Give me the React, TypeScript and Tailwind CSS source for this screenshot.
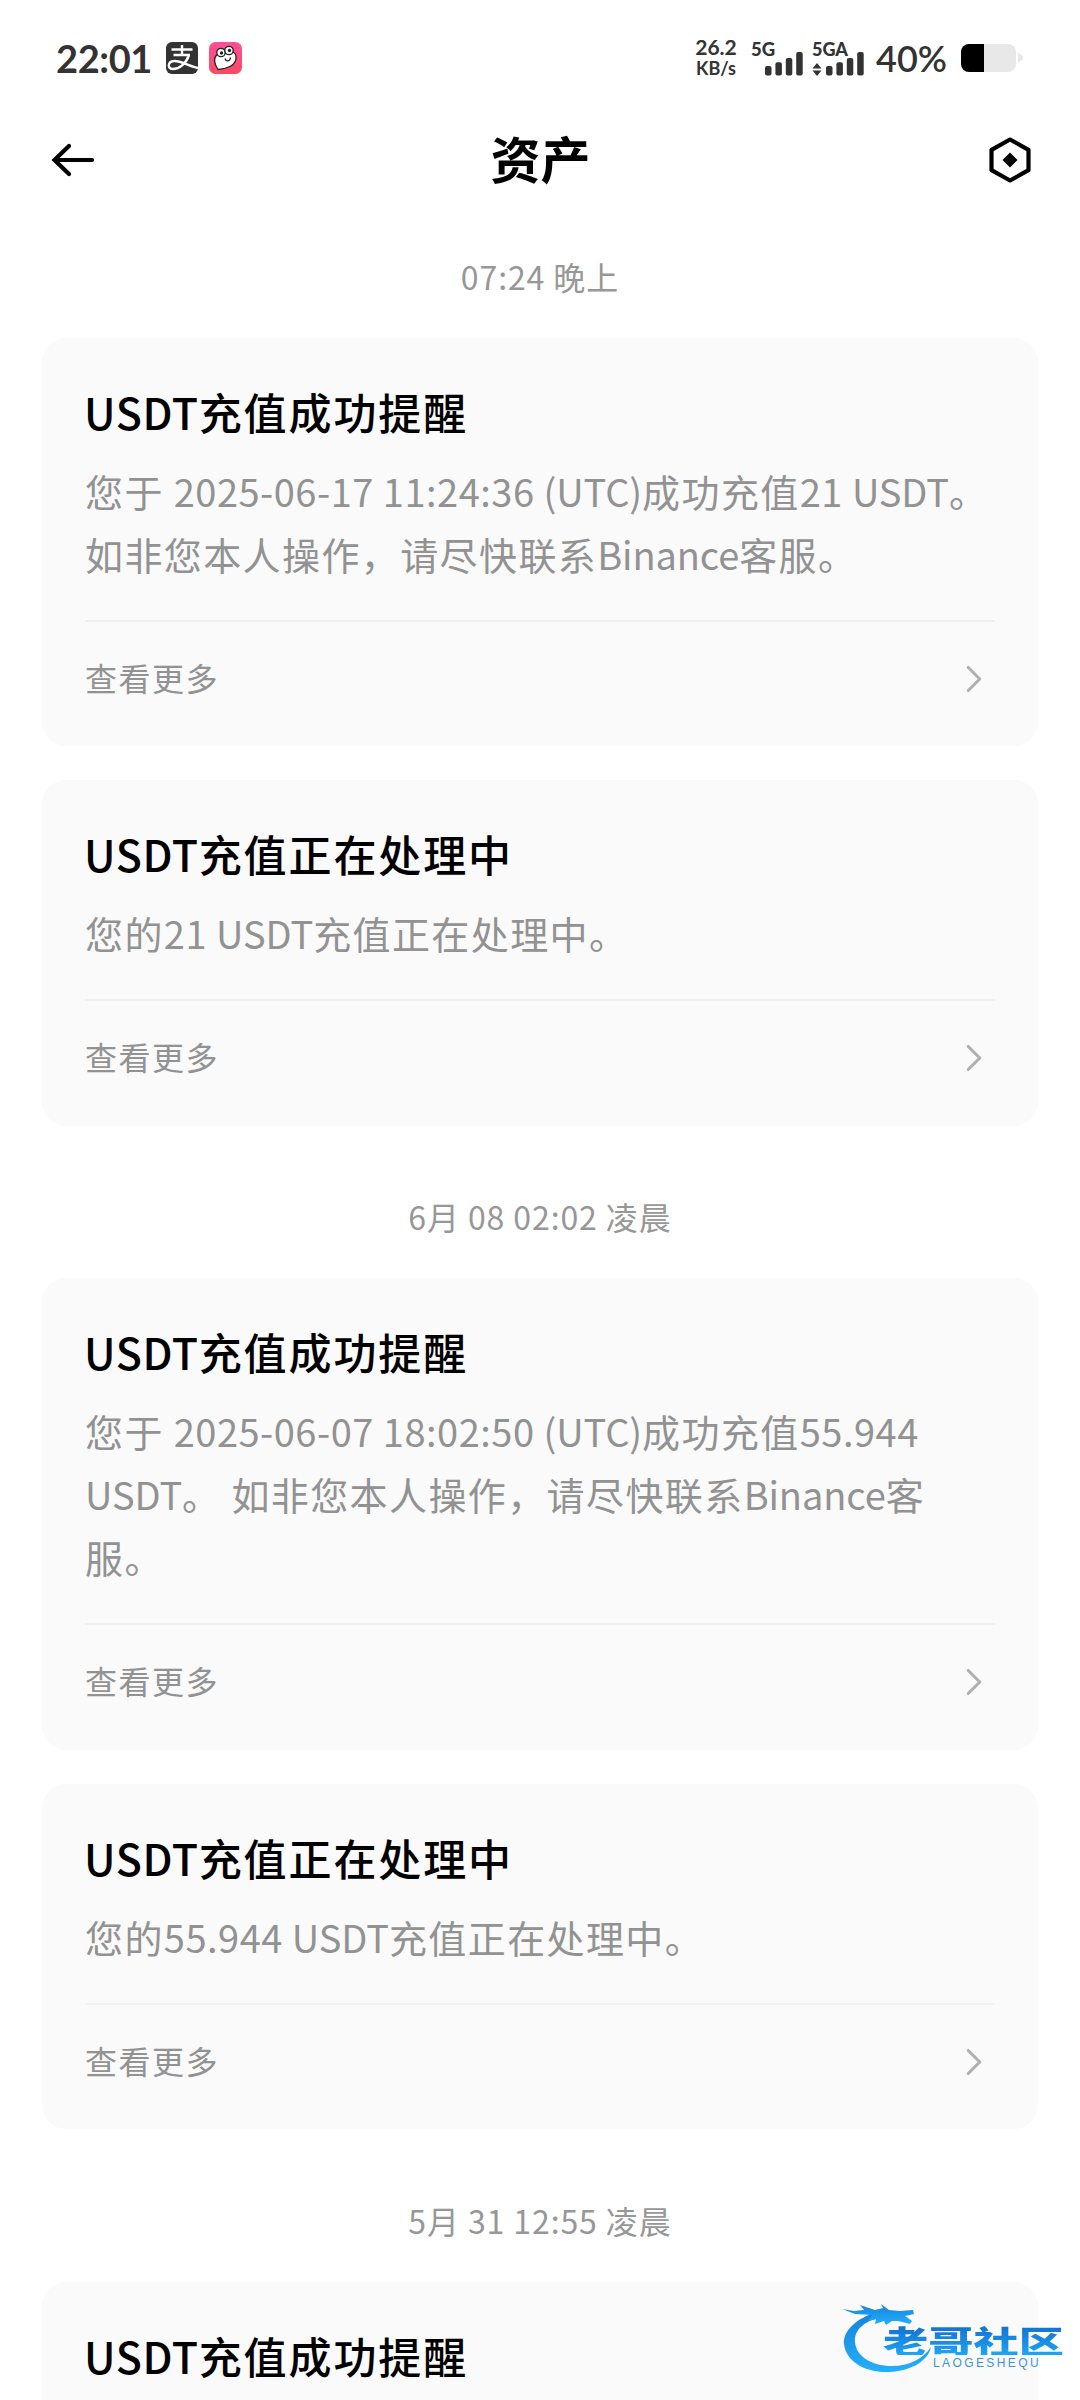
import { ChevronRight } from 'lucide-react';

type Message = { title: string; lines: string[] };
type Group = { time: string; messages: Message[] };

const GROUPS: Group[] = [
  {
    time: '07:24 晚上',
    messages: [
      {
        title: 'USDT充值成功提醒',
        lines: [
          '您于 2025-06-17 11:24:36 (UTC)成功充值21 USDT。',
          '如非您本人操作，请尽快联系Binance客服。',
        ],
      },
      { title: 'USDT充值正在处理中', lines: ['您的21 USDT充值正在处理中。'] },
    ],
  },
  {
    time: '6月 08 02:02 凌晨',
    messages: [
      {
        title: 'USDT充值成功提醒',
        lines: [
          '您于 2025-06-07 18:02:50 (UTC)成功充值55.944',
          'USDT。 如非您本人操作，请尽快联系Binance客',
          '服。',
        ],
      },
      { title: 'USDT充值正在处理中', lines: ['您的55.944 USDT充值正在处理中。'] },
    ],
  },
  {
    time: '5月 31 12:55 凌晨',
    messages: [{ title: 'USDT充值成功提醒', lines: [] }],
  },
];

// Latin letters and digits are set tighter than the Chinese text around them
function MixedText({ text }: { text: string }) {
  const parts = text.split(/([A-Za-z()]+|[0-9][0-9:.\- ]*)/);
  return (
    <>
      {parts.map((part, i) => {
        if (/^[A-Za-z(]/.test(part)) {
          return <span key={i} className="tracking-[-0.1px]">{part}</span>;
        }
        if (/^[0-9]/.test(part)) {
          return <span key={i} className="tracking-[0.5px]">{part}</span>;
        }
        return part;
      })}
    </>
  );
}

function SignalBars() {
  return (
    <svg width="38" height="24" viewBox="0 0 38 24" fill="#333">
      <rect x="0" y="14" width="6.5" height="9.5" rx="2" />
      <rect x="10.4" y="10.3" width="6.5" height="13.2" rx="2" />
      <rect x="20.8" y="6" width="6.5" height="17.5" rx="2" />
      <rect x="31.2" y="0" width="6.5" height="23.5" rx="2" />
    </svg>
  );
}

function StatusBar() {
  return (
    <div className="flex h-[118px] items-start pl-[56px] pr-[57px] font-['Lato','Noto_Sans_CJK_SC',sans-serif] text-[#333]">
      <span className="mt-[37px] w-[110px] text-[38px] leading-[42px] font-bold tracking-[-0.4px]">22:01</span>
      <svg className="mt-[42px]" width="32" height="32" viewBox="0 0 32 32">
        <rect width="32" height="32" rx="6" fill="#333" />
        <g fill="none" stroke="#fff" strokeWidth="2.4">
          <path d="M5.5 7.5H26.5M16 3V13M7.5 13H24" />
          <path d="M23 13C20 22 13 27 7 27C1 27 1.5 19.5 8 19C15 18.5 22 24 32 26" />
        </g>
      </svg>
      <svg className="mt-[42px] ml-[11px]" width="33" height="32" viewBox="0 0 33 32">
        <defs>
          <linearGradient id="pink" x1="0" y1="0" x2="0" y2="1">
            <stop offset="0" stopColor="#ff4f9a" />
            <stop offset="1" stopColor="#fb4a60" />
          </linearGradient>
        </defs>
        <rect width="33" height="32" rx="6.5" fill="url(#pink)" />
        <g fill="#fff" stroke="#222" strokeWidth="1.3">
          <path d="M7.5 13C4 17 6 23 9 27.5C15 27 24 25 26.5 19C28 14 26 11 24 10Z" />
          <circle cx="12" cy="10.5" r="4.2" />
          <circle cx="20" cy="8.5" r="4.2" />
          <path d="M16 16.5C17 20 21 19.5 21.5 15.5" fill="none" />
        </g>
        <circle cx="12.5" cy="11" r="1.7" fill="#222" />
        <circle cx="20.5" cy="8.5" r="1.7" fill="#222" />
      </svg>

      <div className="ml-auto flex items-start">
        <div className="mt-[36px] w-[44px] text-center font-bold">
          <div className="text-[21px] leading-[22px]">26.2</div>
          <div className="text-[18px] leading-[21px]">KB/s</div>
        </div>
        <div className="ml-[13px] mt-[38px] w-[61px]">
          <div className="h-[14px] text-[18.5px] leading-[22px] font-black">5G</div>
          <div className="pl-[14px]">
            <SignalBars />
          </div>
        </div>
        <div className="mt-[38px] w-[63px]">
          <div className="h-[14px] text-[18px] leading-[22px] font-black">5GA</div>
          <div className="flex items-end gap-[4px]">
            <svg width="10" height="13" viewBox="0 0 10 13" fill="#333">
              <path d="M5 0L9.5 5.5H0.5ZM0.5 7.5H9.5L5 13Z" />
            </svg>
            <SignalBars />
          </div>
        </div>
        <span className="mt-[37px] w-[86px] pl-px text-[36px] leading-[42px] font-semibold">40%</span>
        <svg className="mt-[43px]" width="62" height="30" viewBox="0 0 62 30">
          <rect y="1" width="55" height="28" rx="8" fill="#e8e8e8" />
          <path d="M23 1H8A8 8 0 0 0 0 9V21A8 8 0 0 0 8 29H23Z" fill="#000" />
          <path d="M57 10Q62 12 62 15T57 19Z" fill="#e8e8e8" />
        </svg>
      </div>
    </div>
  );
}

function Header() {
  return (
    <header className="flex h-[84px] items-center justify-between pl-[51px] pr-[48px]">
      <svg width="44" height="36" viewBox="0 0 44 36" fill="none" stroke="#000" strokeWidth="4.2" strokeLinecap="round">
        <path d="M41 18H4M18 4L3.5 18L18 32" />
      </svg>
      <h1 className="pr-[2px] pb-[6px] text-[50px] leading-[60px] font-bold">资产</h1>
      <svg width="44" height="48" viewBox="0 0 44 48">
        <path d="M22 3.5L40.5 13.8V34.2L22 44.5L3.5 34.2V13.8Z" fill="none" stroke="#000" strokeWidth="4.2" strokeLinejoin="round" />
        <path d="M22 16.5L29.5 24L22 31.5L14.5 24Z" />
      </svg>
    </header>
  );
}

function MessageCard({ title, lines }: Message) {
  return (
    <article className="min-h-[345px] rounded-[24px] bg-[#fafafa] px-[43px] pt-[45px]">
      <h2 className="h-14 text-[43px] leading-[56px] font-medium tracking-[1.9px] text-black">
        <span className="-ml-px tracking-[0.6px]">{title.slice(0, 4)}</span>
        {title.slice(4)}
      </h2>
      <div className="mt-5 text-[38px] leading-[63px] tracking-[1.4px] text-[#929292]">
        {lines.map((line) => (
          <p key={line} className="whitespace-pre">
            <MixedText text={line} />
          </p>
        ))}
      </div>
      {lines.length > 0 && (
        <div className="mt-[35px] flex h-[126.3px] items-center justify-between border-t-2 border-[#f0f0f0] pb-[10px]">
          <span className="pb-[4px] text-[32px] tracking-[1.5px] text-[#929292]">查看更多</span>
          <ChevronRight size={46} strokeWidth={1.6} className="-mr-0.5 text-[#b0b0b0]" />
        </div>
      )}
    </article>
  );
}

function Watermark() {
  return (
    <div className="absolute top-[2300px] left-[840px] h-[76px] w-[226px]">
      <svg className="absolute inset-0" width="226" height="76" viewBox="0 0 226 76">
        <defs>
          <linearGradient id="dragon" x1="0" y1="0" x2="0" y2="1">
            <stop offset="0" stopColor="#1583dd" />
            <stop offset="1" stopColor="#23b0fa" />
          </linearGradient>
        </defs>
        <g fill="url(#dragon)">
          <path d="M34 13C14 20 3 32 4 44C6 62 26 73 49 72C71 71 88 61 91 47C83 59 69 66 52 66C31 66 16 56 15 42C14 30 24 21 40 18Z" />
          <path d="M2 9L14 11L24 10L20 5L35 10L43 8L41 4L49 10L60 11L73 10L74 14L65 16L72 21L70 24L58 21L52 21L46 25L44 21L35 24L36 19L28 21L32 15L15 14Z" />
        </g>
      </svg>
      <div className="absolute top-[25px] left-[43px] origin-left scale-x-[1.46] bg-gradient-to-b from-[#1270cf] to-[#22a4f2] bg-clip-text text-[31px] leading-[30px] font-black whitespace-nowrap text-transparent">
        老哥社区
      </div>
      <div className="absolute top-[57px] left-[93px] font-['Liberation_Sans',sans-serif] text-[12px] leading-[13px] tracking-[2.4px] text-[#3a94da]">
        LAOGESHEQU
      </div>
    </div>
  );
}

export default function App() {
  return (
    <div className="relative h-[2400px] w-[1080px] overflow-hidden bg-white font-['Noto_Sans_CJK_SC',sans-serif] text-black">
      <StatusBar />
      <Header />
      <main className="px-[42px] pt-[17px]">
        {GROUPS.map((group) => (
          <section key={group.time} className="mb-[33.7px]">
            <div className="h-[119px] pt-[33px] text-center text-[32px] leading-[48px] tracking-[0.9px] text-[#979797]">
              {group.time}
            </div>
            <div className="flex flex-col gap-[34px]">
              {group.messages.map((m) => (
                <MessageCard key={m.title} {...m} />
              ))}
            </div>
          </section>
        ))}
      </main>
      <Watermark />
    </div>
  );
}
